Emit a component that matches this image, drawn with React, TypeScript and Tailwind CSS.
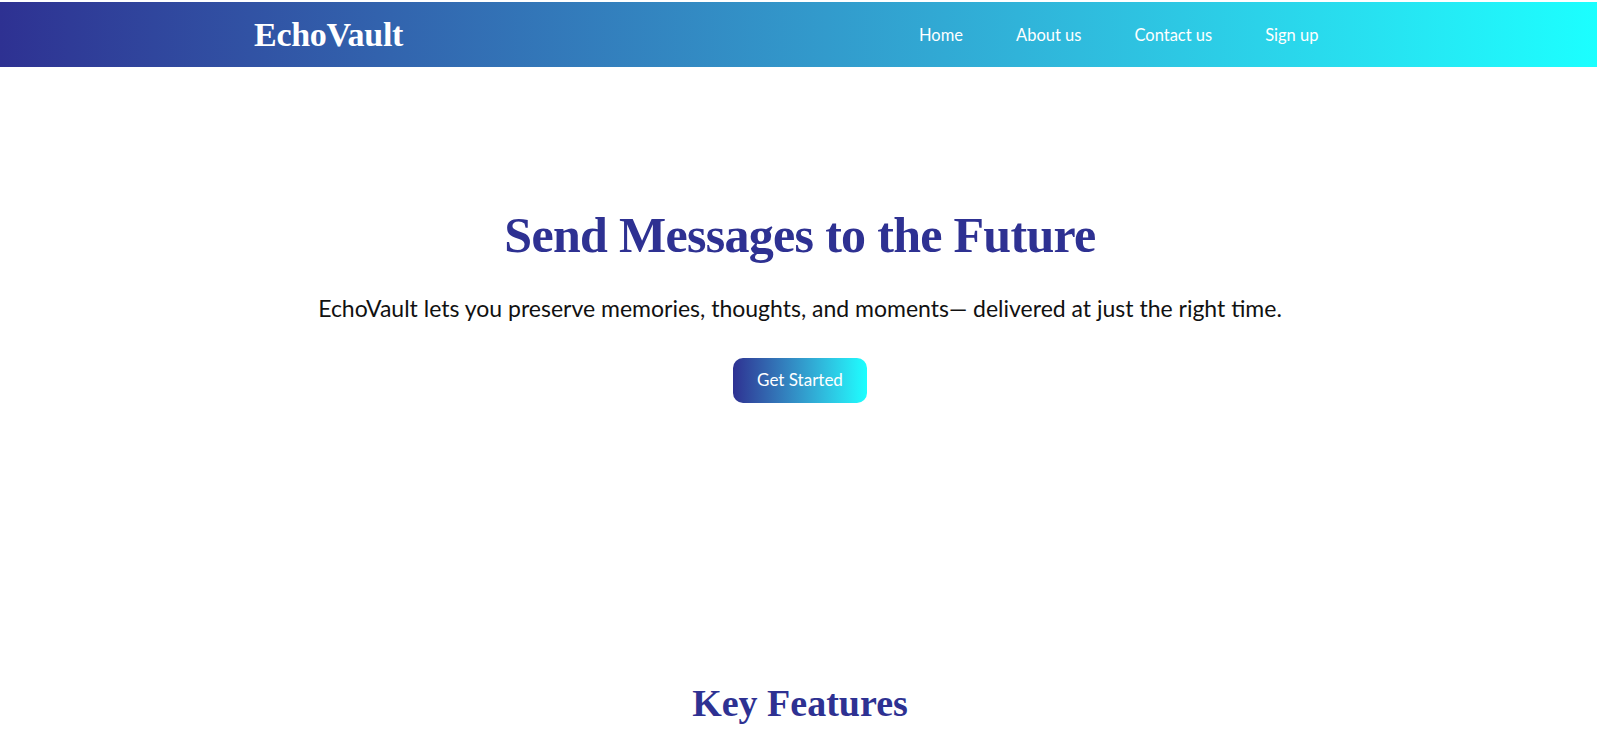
import React from "react";

export default function App() {
  const serif = { fontFamily: '"Liberation Serif", "DejaVu Serif", serif' };
  return (
    <div className="min-h-screen bg-white" style={{ fontFamily: 'Lato, "Open Sans", sans-serif' }}>
      <header className="mt-[2px] mr-[3px] h-[65px] bg-gradient-to-r from-[#2e3192] to-[#1bffff] flex items-center justify-between pl-[254px] pr-[252px]">
        <div className="text-white text-[34px] font-bold tracking-[-0.3px] leading-none" style={serif}>
          EchoVault
        </div>
        <nav className="flex items-center pt-[2px]">
          {["Home", "About us", "Contact us", "Sign up"].map((l) => (
            <a key={l} className="text-white text-[16.5px] px-[26.5px]">
              {l}
            </a>
          ))}
        </nav>
      </header>

      <section className="flex flex-col items-center pt-[138px]">
        <h1 className="text-[#2e3192] text-[50px] font-bold tracking-[-0.7px] leading-[1.2]" style={serif}>
          Send Messages to the Future
        </h1>
        <p className="mt-[26px] text-[23px] text-[#111]">
          EchoVault lets you preserve memories, thoughts, and moments— delivered at just the right time.
        </p>
        <button className="mt-[32px] w-[134px] h-[45px] rounded-[10px] bg-gradient-to-r from-[#2e3192] to-[#1bffff] text-white text-[17px]">
          Get Started
        </button>
      </section>

      <section className="flex flex-col items-center pt-[278px]">
        <h2 className="text-[#2e3192] text-[38px] font-bold leading-[1.2]" style={serif}>
          Key Features
        </h2>
      </section>
    </div>
  );
}
